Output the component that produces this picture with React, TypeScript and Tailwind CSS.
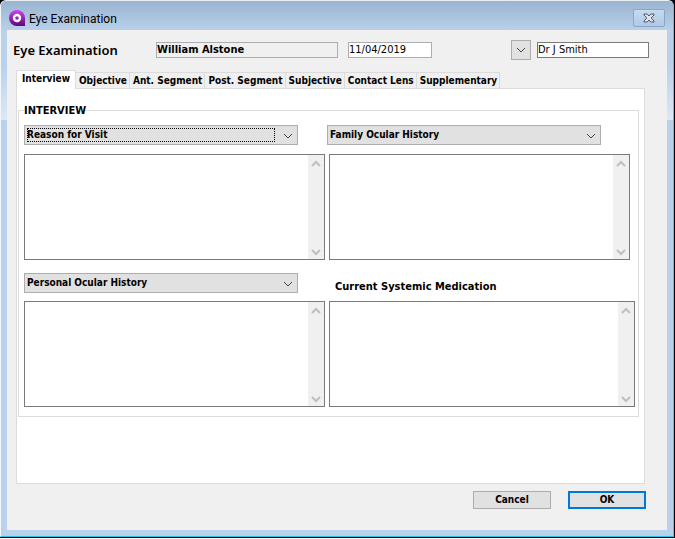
import { useState } from "react";
import type { ReactNode } from "react";
import clsx from "clsx";

const TABS = [
  "Interview",
  "Objective",
  "Ant. Segment",
  "Post. Segment",
  "Subjective",
  "Contact Lens",
  "Supplementary",
];

function Chevron({ up = false, className }: { up?: boolean; className?: string }) {
  return (
    <svg
      width="10"
      height="10"
      viewBox="0 0 10 10"
      fill="none"
      stroke="currentColor"
      className={className}
      aria-hidden="true"
    >
      <path d={up ? "M1 7 L5 3 L9 7" : "M1 3 L5 7 L9 3"} />
    </svg>
  );
}

function AppLogo() {
  return (
    <svg width="16" height="16" viewBox="0 0 16 16" aria-hidden="true">
      <defs>
        <linearGradient id="logo-fill" x1="0" y1="0" x2="0" y2="1">
          <stop offset="0" stopColor="#cb45ee" />
          <stop offset="1" stopColor="#5f077c" />
        </linearGradient>
      </defs>
      <path d="M8 0 A8 8 0 0 1 16 8 V16 H8 A8 8 0 0 1 8 0 Z" fill="url(#logo-fill)" />
      <circle cx="8" cy="8" r="3" fill="none" stroke="#fff" strokeWidth="2.4" />
    </svg>
  );
}

function CloseIcon() {
  return (
    <svg width="12" height="10" viewBox="0 0 12 10" aria-hidden="true">
      <path
        d="M1 1 H4.2 L6 3 L7.8 1 H11 V2 L8.2 5 L11 8 V9 H7.8 L6 7 L4.2 9 H1 V8 L3.8 5 L1 2 Z"
        fill="#dfe5ec"
        stroke="#535666"
        strokeLinejoin="round"
      />
    </svg>
  );
}

function HistorySelect({ label, focused = false }: { label: string; focused?: boolean }) {
  return (
    <div className="relative h-5 w-[274px] min-w-0 border border-[#adadad] bg-[#e1e1e1]">
      <select
        aria-label={label}
        className="block h-full w-full appearance-none bg-transparent pb-px pl-0.5 text-[10px] font-bold outline-none"
      >
        <option>{label}</option>
      </select>
      {focused && (
        <div className="pointer-events-none absolute top-0.5 right-[22px] bottom-0.5 left-0.5 border border-dotted border-black" />
      )}
      <Chevron className="pointer-events-none absolute top-[5px] right-1 text-[#444]" />
    </div>
  );
}

function NotesBox({ label, className }: { label: string; className?: string }) {
  return (
    <div className={clsx("flex h-[106px] min-w-0 border border-[#7a7a7a] bg-white", className)}>
      <textarea
        aria-label={label}
        className="block min-w-0 flex-1 resize-none overflow-hidden p-0.5 outline-none"
      />
      <div className="flex w-4 flex-col items-center justify-between bg-[#f0f0f0] pt-1 pb-0.5 text-[#bfbfbf]">
        <Chevron up className="stroke-2" />
        <Chevron className="stroke-2" />
      </div>
    </div>
  );
}

function DialogButton({ children, primary = false }: { children: ReactNode; primary?: boolean }) {
  return (
    <button
      type="button"
      className={clsx(
        "h-[18px] w-[78px] bg-[#e1e1e1] text-[10px] font-bold leading-3",
        primary ? "border-2 border-[#0078d7]" : "border border-[#adadad]",
      )}
    >
      {children}
    </button>
  );
}

// The side frame has a glass highlight that stops below the tabs
function SideFrame() {
  return (
    <div className="w-1.5 shrink-0 bg-[#b9d1ea]">
      <div className="h-[90px] bg-gradient-to-b from-[#b9d1ea] from-40% to-[#dce9f7]" />
    </div>
  );
}

export default function App() {
  const [tab, setTab] = useState("Interview");

  return (
    <div className="bg-white pb-px font-['DejaVu_Sans_Condensed','DejaVu_Sans',sans-serif] text-[11px] leading-4 text-black">
      <div className="border-r border-b border-black bg-black">
        <div className="overflow-hidden rounded-t-md border border-t-[#e9eef4] border-r-[#4cc8e8] border-b-[#27c4e0] border-l-[#f4f7fa] bg-[#b9d1ea]">
          <header className="flex h-[29px] items-center gap-1 bg-gradient-to-b from-[#99b4d1] to-[#b9d1ea] pt-1 pr-2 pl-2">
            <AppLogo />
            <span className="pt-0.5 font-[Roboto,sans-serif] text-xs">Eye Examination</span>
            <button
              type="button"
              aria-label="Close"
              className="ml-auto flex h-[18px] w-8 items-center justify-center rounded-xs border border-[#8aa5c6] bg-gradient-to-b from-[#c6daf0] to-[#b0c9e6]"
            >
              <CloseIcon />
            </button>
          </header>

          <div className="flex">
            <SideFrame />
            <main className="min-w-0 flex-1 bg-[#f0f0f0] pt-2.5 pr-[18px] pb-[21px] pl-1.5">
              <div className="flex items-center">
                <h1 className="w-[143px] shrink-0 font-['Noto_Sans',sans-serif] text-[13px] font-semibold">
                  Eye Examination
                </h1>
                <input
                  aria-label="Patient"
                  readOnly
                  defaultValue="William Alstone"
                  className="h-4 w-[182px] min-w-0 border border-[#abadb3] bg-[#f0f0f0] font-bold outline-none"
                />
                <input
                  aria-label="Examination date"
                  defaultValue="11/04/2019"
                  className="ml-2.5 h-4 w-[84px] min-w-0 border border-[#abadb3] bg-white outline-none"
                />
                <button
                  type="button"
                  aria-label="Choose practitioner"
                  className="ml-auto flex size-5 shrink-0 items-center justify-center border border-[#adadad] bg-[#e1e1e1] text-[#444]"
                >
                  <Chevron />
                </button>
                <input
                  aria-label="Practitioner"
                  defaultValue="Dr J Smith"
                  className="ml-1.5 h-4 w-28 min-w-0 border border-[#7a7a7a] bg-white outline-none"
                />
              </div>

              <div className="mr-1 ml-[3px]">
                <div role="tablist" className="mt-2.5 flex items-end">
                  {TABS.map((name) => (
                    <button
                      key={name}
                      type="button"
                      role="tab"
                      aria-selected={tab === name}
                      onClick={() => setTab(name)}
                      className={clsx(
                        "border-[#dcdcdc] text-[10px] font-bold whitespace-nowrap",
                        tab === name
                          ? "relative -mb-px h-[19px] border border-b-0 bg-white px-[5px] pb-0.5"
                          : "h-4 border-t border-r pr-0.5 pl-[3px]",
                      )}
                    >
                      {name}
                    </button>
                  ))}
                </div>

                <div role="tabpanel" className="border border-[#dcdcdc] bg-white pt-3 pr-[5px] pb-[66px] pl-px">
                  <fieldset className="min-w-0 border border-[#dcdcdc] pr-[3px] pb-[9px] pl-[5px]">
                    <legend className="pt-0.5 font-bold">INTERVIEW</legend>

                    <div className="mt-1.5 flex gap-[29px]">
                      <HistorySelect label="Reason for Visit" focused />
                      <HistorySelect label="Family Ocular History" />
                    </div>
                    <div className="mt-[9px] flex gap-1 pr-[5px]">
                      <NotesBox label="Reason for Visit notes" className="flex-1" />
                      <NotesBox label="Family Ocular History notes" className="flex-1" />
                    </div>

                    <div className="mt-[13px] flex gap-[37px]">
                      <HistorySelect label="Personal Ocular History" />
                      <span className="pt-1.5 font-bold">Current Systemic Medication</span>
                    </div>
                    <div className="mt-1.5 flex gap-1">
                      <NotesBox label="Personal Ocular History notes" className="flex-[301]" />
                      <NotesBox label="Current Systemic Medication" className="flex-[306]" />
                    </div>
                  </fieldset>
                </div>
              </div>

              <div className="mt-[7px] flex justify-end gap-[17px] pr-[3px]">
                <DialogButton>Cancel</DialogButton>
                <DialogButton primary>OK</DialogButton>
              </div>
            </main>
            <SideFrame />
          </div>
          <div className="h-1.5" />
        </div>
      </div>
    </div>
  );
}
